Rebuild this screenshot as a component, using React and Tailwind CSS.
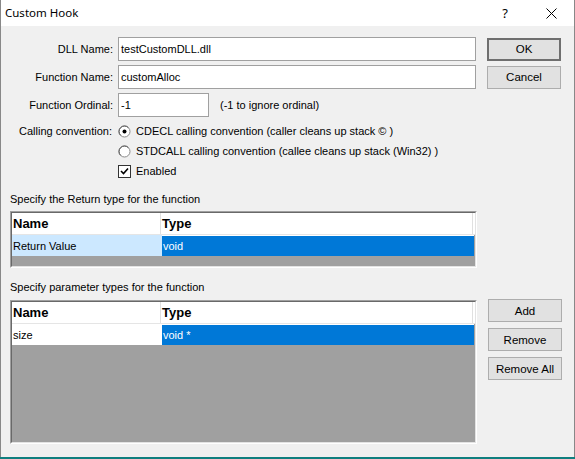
import React from "react";

function Radio({ checked }) {
  return (
    <svg width="13" height="13" viewBox="0 0 13 13" className="shrink-0">
      <circle cx="6.5" cy="6.5" r="5.5" fill="#fff" stroke="#8a8a8a" strokeWidth="1" />
      <path d="M2.6 10.4 A5.5 5.5 0 0 1 2.6 2.6 A5.5 5.5 0 0 1 10.4 2.6" fill="none" stroke="#5a5a5a" strokeWidth="1" />
      {checked && <circle cx="6.5" cy="6.5" r="2" fill="#000" />}
    </svg>
  );
}

function Checkbox() {
  return (
    <div className="w-[13px] h-[13px] border border-[#333] bg-white flex items-center justify-center shrink-0">
      <svg width="9" height="9" viewBox="0 0 9 9">
        <path d="M1 4 L3.5 6.5 L8 1.5" fill="none" stroke="#000" strokeWidth="1.6" />
      </svg>
    </div>
  );
}

function Btn({ children, def }) {
  return (
    <div
      className={
        "w-[74px] h-[23px] bg-[#e1e1e1] flex items-center justify-center text-[11.5px] " +
        (def ? "border-2 border-[#6f6f6f]" : "border border-[#adadad]")
      }
    >
      {children}
    </div>
  );
}

function Input({ w, value }) {
  return (
    <div className={"h-[24px] bg-white border border-[#a0a0a0] flex items-center pl-[2px] " + w}>
      {value}
    </div>
  );
}

function Table({ h, nameVal, nameBg, typeVal }) {
  return (
    <div className={"w-[467px] border border-t-[#a0a0a0] border-l-[#a0a0a0] border-b-white border-r-white " + h}>
      <div className="w-full h-full border border-t-[#696969] border-l-[#696969] border-b-[#e3e3e3] border-r-[#e3e3e3] bg-[#a0a0a0] flex flex-col">
        <div className="h-[22px] bg-white flex font-['Liberation_Sans'] font-bold text-[13px] border-b border-[#e5e5e5] shrink-0">
          <div className="w-[149px] pl-[1px] flex items-center border-r border-[#e0e0e0]">Name</div>
          <div className="flex-1 pl-[1px] flex items-center border-r border-[#e0e0e0]">Type</div>
          <div className="w-[2px]" />
        </div>
        <div className="h-[21px] flex font-['Liberation_Sans'] text-[11px] shrink-0">
          <div className={"w-[150px] pl-[1px] flex items-center " + nameBg}>{nameVal}</div>
          <div className="flex-1 pl-[1px] flex items-center bg-[#0078d7] text-white border-t border-white mr-[1px]">{typeVal}</div>
        </div>
      </div>
    </div>
  );
}

export default function App() {
  return (
    <div className="w-[575px] h-[459px] bg-[#f0f0f0] flex flex-col overflow-hidden text-black font-['Liberation_Sans',sans-serif] text-[11px] leading-[14px]">
      <div className="flex-1 flex flex-col border-x border-[#888]">
        <div className="h-[26px] bg-white flex items-center pl-[4px] shrink-0 font-['Noto_Sans',sans-serif] text-[11.5px]">
          <span className="flex-1">Custom Hook</span>
          <span className="w-[46px] text-center text-[13px]">?</span>
          <span className="w-[46px] flex justify-center">
            <svg width="11" height="11" viewBox="0 0 11 11">
              <path d="M0.5 0.5 L10.5 10.5 M10.5 0.5 L0.5 10.5" stroke="#000" strokeWidth="1" />
            </svg>
          </span>
        </div>
        <div className="flex flex-col pt-[11px]">
          <div className="flex items-center h-[24px]">
            <div className="w-[117px] text-right pr-[5px]">DLL Name:</div>
            <Input w="w-[358px]" value="testCustomDLL.dll" />
            <div className="ml-[11px]"><Btn def>OK</Btn></div>
          </div>
          <div className="flex items-center h-[24px] mt-[4px]">
            <div className="w-[117px] text-right pr-[5px]">Function Name:</div>
            <Input w="w-[358px]" value="customAlloc" />
            <div className="ml-[11px]"><Btn>Cancel</Btn></div>
          </div>
          <div className="flex items-center h-[24px] mt-[4px]">
            <div className="w-[117px] text-right pr-[5px]">Function Ordinal:</div>
            <Input w="w-[91px]" value="-1" />
            <div className="ml-[11px]">(-1 to ignore ordinal)</div>
          </div>
          <div className="flex items-center h-[20px] mt-[4px]">
            <div className="w-[117px] pl-[18px]">Calling convention:</div>
            <Radio checked />
            <span className="ml-[5px]">CDECL calling convention (caller cleans up stack © )</span>
          </div>
          <div className="flex items-center h-[20px] pl-[117px]">
            <Radio />
            <span className="ml-[5px]">STDCALL calling convention (callee cleans up stack (Win32) )</span>
          </div>
          <div className="flex items-center h-[20px] pl-[117px]">
            <Checkbox />
            <span className="ml-[5px]">Enabled</span>
          </div>
          <div className="pl-[9px] mt-[11px] h-[14px]">Specify the Return type for the function</div>
          <div className="pl-[9px] mt-[5px]">
            <Table h="h-[57px]" nameVal="Return Value" nameBg="bg-[#cce8ff]" typeVal="void" />
          </div>
          <div className="pl-[9px] mt-[12px] h-[14px]">Specify parameter types for the function</div>
          <div className="flex pl-[9px] mt-[6px]">
            <Table h="h-[144px]" nameVal="size" nameBg="bg-white" typeVal="void *" />
            <div className="ml-[11px] -mt-[1px] flex flex-col gap-[6px]">
              <Btn>Add</Btn>
              <Btn>Remove</Btn>
              <Btn>Remove All</Btn>
            </div>
          </div>
        </div>
      </div>
      <div className="h-[2px] bg-[#0f7f7f] shrink-0" />
    </div>
  );
}
